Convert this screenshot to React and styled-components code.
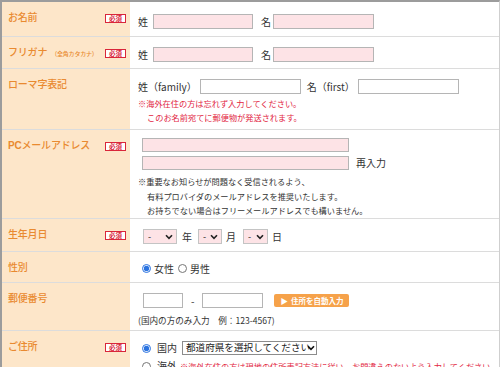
import styled, { createGlobalStyle } from 'styled-components';

const GlobalStyle = createGlobalStyle`
  html, body {
    margin: 0;
    padding: 0;
    background: #fff;
  }
  body {
    font-family: "Noto Sans CJK JP", "Noto Sans", sans-serif;
    overflow: hidden;
  }
`;

// Form table frame
const Table = styled.div`
  width: 500px;
  height: 367px;
  box-sizing: border-box;
  border-top: 2px solid #9c9c9c;
  border-left: 2px solid #9c9c9c;
  border-right: 1px solid #cfcfcf;
  overflow: hidden;
`;

const Row = styled.div`
  display: grid;
  grid-template-columns: 128px 1fr;
  height: ${(p) => p.$h}px;
  box-sizing: border-box;
  border-bottom: 1px solid #dcdcdc;
`;

const LabelCell = styled.div`
  background: #fde6c9;
  display: flex;
  justify-content: space-between;
  align-items: flex-start;
  padding: 8px 4px 0 6px;
`;

const LabelText = styled.span`
  color: #e98a30;
  font-size: 10px;
  font-weight: 500;
  line-height: 14px;
  letter-spacing: -0.2px;
  white-space: nowrap;

  b {
    font-family: "Liberation Sans", sans-serif;
    font-weight: bold;
    font-size: 10px;
  }
  small {
    font-size: 6px;
    margin-left: 4px;
  }
`;

const Badge = styled.span`
  margin-top: 4px;
  width: 21px;
  height: 9px;
  box-sizing: border-box;
  border: 1px solid #d9263a;
  background: #fff;
  color: #d9263a;
  font-size: 6.5px;
  font-weight: bold;
  line-height: 7px;
  text-align: center;
  flex-shrink: 0;
`;

const ContentCell = styled.div`
  padding: ${(p) => p.$pt ?? 10}px 0 0 8px;
  font-size: 10px;
  color: #333;
`;

const Line = styled.div`
  display: flex;
  align-items: center;
  height: ${(p) => p.$h || 15}px;
  margin-top: ${(p) => p.$mt || 0}px;
  white-space: nowrap;
`;

const Word = styled.span`
  margin-right: ${(p) => p.$mr || 0}px;
  margin-left: ${(p) => p.$ml || 0}px;
  line-height: 1;
`;

const TextInput = styled.input`
  width: ${(p) => p.$w}px;
  height: ${(p) => p.$ht || 15}px;
  box-sizing: border-box;
  border: 1px solid #b5b5b5;
  background: ${(p) => (p.$pink ? '#fde3e6' : '#fff')};
  margin: 0 ${(p) => p.$mr || 0}px 0 ${(p) => p.$ml || 0}px;
  padding: 0;
  outline: none;
`;

const Note = styled.p`
  margin: ${(p) => p.$mt || 0}px 0 0 ${(p) => (p.$indent ? 9 : 0)}px;
  font-size: ${(p) => p.$fs || 8.2}px;
  line-height: ${(p) => p.$lh || 14}px;
  color: ${(p) => (p.$red ? '#e2263f' : '#333')};
  white-space: nowrap;
`;

const SelectWrap = styled.span`
  position: relative;
  display: inline-block;
  margin: 0 ${(p) => p.$mr || 0}px 0 ${(p) => p.$ml || 0}px;
`;

const Select = styled.select`
  appearance: none;
  width: ${(p) => p.$w}px;
  height: ${(p) => p.$ht || 15}px;
  box-sizing: border-box;
  border: 1px solid ${(p) => (p.$pink ? '#c4c4c4' : '#8c8c8c')};
  background: ${(p) => (p.$pink ? '#fde3e6' : '#fff')};
  font-family: "Noto Sans CJK JP", sans-serif;
  font-size: ${(p) => p.$fs || 9}px;
  color: #222;
  padding: 0 0 0 ${(p) => p.$pl || 4}px;
  margin: 0;
  display: block;
  line-height: 1;
`;

const Chevron = styled.svg`
  position: absolute;
  right: ${(p) => p.$r || 4}px;
  top: 50%;
  transform: translateY(-50%);
  pointer-events: none;
`;

const Radio = styled.input.attrs({ type: 'radio' })`
  width: 9px;
  height: 9px;
  margin: 0 ${(p) => p.$mr || 4}px 0 4px;
  accent-color: #2b73e0;
`;

const AutoButton = styled.button`
  margin-left: 11px;
  width: 75px;
  height: 13px;
  border: none;
  border-radius: 2px;
  background: #f6a24a;
  color: #fff;
  font-family: "Noto Sans CJK JP", sans-serif;
  font-size: 7.5px;
  font-weight: bold;
  padding: 0;
  display: flex;
  align-items: center;
  justify-content: center;
  gap: 3px;
  line-height: 1;
`;

function Down({ r, dark }) {
  return (
    <Chevron $r={r} width="8" height="6" viewBox="0 0 8 6">
      <path d="M1 1.2 L4 4.4 L7 1.2" fill="none" stroke={dark ? '#111' : '#222'} strokeWidth="1.6" />
    </Chevron>
  );
}

function DateSelect({ w, ml, mr }) {
  return (
    <SelectWrap $ml={ml} $mr={mr}>
      <Select $w={w} $pink defaultValue="-">
        <option>-</option>
      </Select>
      <Down />
    </SelectWrap>
  );
}

function Label({ children, required }) {
  return (
    <LabelCell>
      <LabelText>{children}</LabelText>
      {required && <Badge>必須</Badge>}
    </LabelCell>
  );
}

export default function App() {
  return (
    <>
      <GlobalStyle />
      <Table>
        <Row $h={35}>
          <Label required>お名前</Label>
          <ContentCell $pt={12}>
            <Line>
              <Word $mr={5}>姓</Word>
              <TextInput $w={100} $pink $mr={8} />
              <Word $mr={2}>名</Word>
              <TextInput $w={101} $pink />
            </Line>
          </ContentCell>
        </Row>

        <Row $h={32}>
          <Label required>
            フリガナ<small>（全角カタカナ）</small>
          </Label>
          <ContentCell $pt={10}>
            <Line>
              <Word $mr={5}>姓</Word>
              <TextInput $w={100} $pink $mr={8} />
              <Word $mr={2}>名</Word>
              <TextInput $w={101} $pink />
            </Line>
          </ContentCell>
        </Row>

        <Row $h={61}>
          <Label>ローマ字表記</Label>
          <ContentCell $pt={10}>
            <Line>
              <Word $mr={3}>姓（family）</Word>
              <TextInput $w={101} $mr={6} />
              <Word $mr={3}>名（first）</Word>
              <TextInput $w={101} />
            </Line>
            <Note $red $mt={2}>※海外在住の方は忘れず入力してください。</Note>
            <Note $red $indent>このお名前宛てに郵便物が発送されます。</Note>
          </ContentCell>
        </Row>

        <Row $h={89}>
          <Label required>
            <b>PC</b>メールアドレス
          </Label>
          <ContentCell $pt={8}>
            <Line $h={14}>
              <TextInput $w={207} $ht={14} $pink $ml={4} />
            </Line>
            <Line $h={14} $mt={4}>
              <TextInput $w={207} $ht={14} $pink $ml={4} $mr={7} />
              <Word>再入力</Word>
            </Line>
            <Note $mt={4} $lh={14.5}>※重要なお知らせが問題なく受信されるよう、</Note>
            <Note $indent $lh={14.5}>有料プロバイダのメールアドレスを推奨いたします。</Note>
            <Note $indent $lh={14.5}>お持ちでない場合はフリーメールアドレスでも構いません。</Note>
          </ContentCell>
        </Row>

        <Row $h={33}>
          <Label required>生年月日</Label>
          <ContentCell $pt={10}>
            <Line>
              <DateSelect w={34} ml={5} mr={5} />
              <Word $mr={6}>年</Word>
              <DateSelect w={24} mr={4} />
              <Word $mr={7}>月</Word>
              <DateSelect w={25} mr={4} />
              <Word>日</Word>
            </Line>
          </ContentCell>
        </Row>

        <Row $h={31}>
          <Label>性別</Label>
          <ContentCell $pt={9}>
            <Line>
              <Radio name="sex" defaultChecked $mr={3} />
              <Word $mr={0}>女性</Word>
              <Radio name="sex" $mr={3} />
              <Word>男性</Word>
            </Line>
          </ContentCell>
        </Row>

        <Row $h={48}>
          <Label>郵便番号</Label>
          <ContentCell $pt={10}>
            <Line>
              <TextInput $w={40} $ml={5} $mr={8} />
              <Word $mr={8}>-</Word>
              <TextInput $w={61} />
              <AutoButton type="button">
                <span>▶</span>
                <span>住所を自動入力</span>
              </AutoButton>
            </Line>
            <Note $mt={5} $lh={14} $fs={8.6}>
              (国内の方のみ入力　例：123-4567)
            </Note>
          </ContentCell>
        </Row>

        <Row $h={60}>
          <Label required>ご住所</Label>
          <ContentCell $pt={10}>
            <Line $h={14}>
              <Radio name="addr" defaultChecked $mr={6} />
              <Word $mr={5}>国内</Word>
              <SelectWrap>
                <Select $w={135} $ht={14} $fs={9.6} $pl={3} defaultValue="0">
                  <option value="0">都道府県を選択してください</option>
                </Select>
                <Down r={2} dark />
              </SelectWrap>
            </Line>
            <Line $h={14} $mt={4}>
              <Radio name="addr" $mr={6} />
              <Word $mr={3}>海外</Word>
              <Note $red>※海外在住の方は現地の住所表記方法に従い、お間違えのないよう入力してください</Note>
            </Line>
          </ContentCell>
        </Row>
      </Table>
    </>
  );
}
